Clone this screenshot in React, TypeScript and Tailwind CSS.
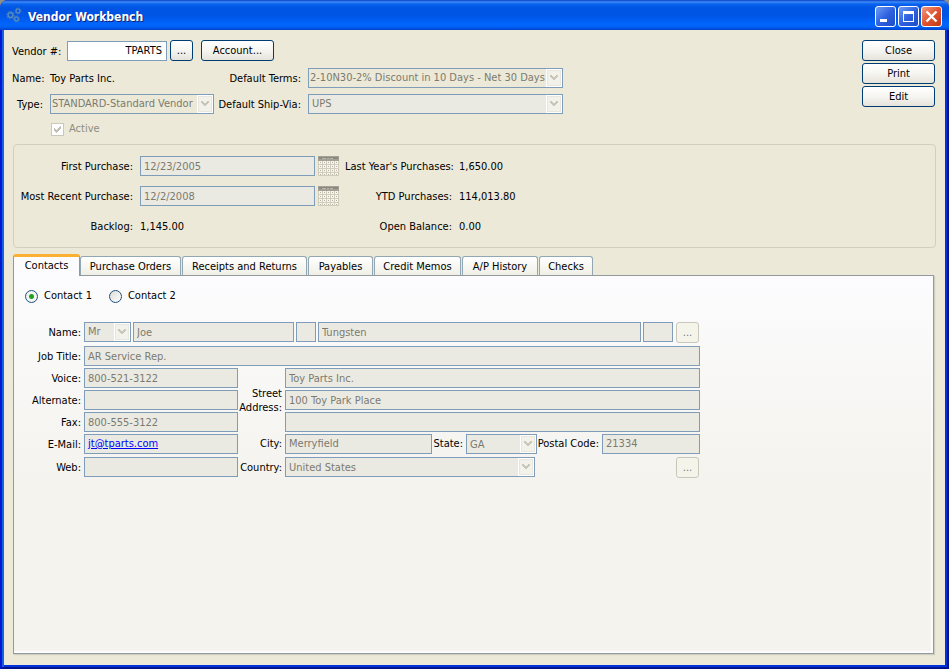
import { useState } from 'react';
import type { InputHTMLAttributes, ReactNode } from 'react';
import clsx from 'clsx';

const tabs = [
  { label: 'Contacts', width: 'w-[67px]' },
  { label: 'Purchase Orders', width: 'w-[101px]' },
  { label: 'Receipts and Returns', width: 'w-[125px]' },
  { label: 'Payables', width: 'w-[65px]' },
  { label: 'Credit Memos', width: 'w-[87px]' },
  { label: 'A/P History', width: 'w-[76px]' },
  { label: 'Checks', width: 'w-[54px]' },
];

const fieldClass = 'h-5 min-w-0 border border-[#7f9db9] bg-[#ebeae2] px-[3px] text-[#7b7a70]';

function Field({ className, ...props }: InputHTMLAttributes<HTMLInputElement>) {
  return <input type="text" disabled className={clsx(fieldClass, className)} {...props} />;
}

function Dropdown({
  id,
  value,
  className,
  bg = 'bg-[#ebeae2]',
  pad = 'pl-[3px]',
}: {
  id: string;
  value: string;
  className?: string;
  bg?: string;
  pad?: string;
}) {
  return (
    <div className={clsx('relative h-5', className)}>
      <select
        id={id}
        disabled
        defaultValue={value}
        className={clsx(
          'block h-5 w-full appearance-none border border-[#7f9db9] pr-4 text-[#7b7a70] opacity-100',
          bg,
          pad
        )}
      >
        <option>{value}</option>
      </select>
      <span className="pointer-events-none absolute top-px right-px h-[18px] w-4 bg-white p-px">
        <svg viewBox="0 0 14 16" className="h-4 w-[14px]" shapeRendering="crispEdges">
          <rect width="14" height="16" rx="1" fill="#e8e7df" />
          <rect x="1" y="1" width="12" height="14" fill="#f3f2ea" />
          <path d="M3 5h2v1h1v1h2v-1h1v-1h2v2h-1v1h-1v1h-1v1h-2v-1h-1v-1h-1v-1h-1z" fill="#c9c7ba" />
        </svg>
      </span>
    </div>
  );
}

function Button({
  children,
  className,
  disabled,
  label,
}: {
  children: ReactNode;
  className?: string;
  disabled?: boolean;
  label?: string;
}) {
  return (
    <button
      disabled={disabled}
      aria-label={label}
      className={clsx(
        'flex h-[21px] shrink-0 items-center justify-center rounded-[3px] border pt-px',
        disabled
          ? 'border-[#c9c7ba] bg-[#f5f4ea] text-[#7b7a70]'
          : 'border-[#003c74] bg-linear-to-b from-white via-[#f6f5f1] to-[#e6e3da] text-black',
        className
      )}
    >
      {children}
    </button>
  );
}

function CalendarIcon() {
  return (
    <svg viewBox="0 0 21 20" className="h-5 w-[21px] shrink-0" shapeRendering="crispEdges">
      <rect width="21" height="20" fill="#cfccbc" />
      <rect width="21" height="5" fill="#a3a195" />
      <rect x="1" y="1" width="19" height="2" fill="#8b897e" />
      <path d="M4 2.5h4M9 2.5h2M12 2.5h3" stroke="#b9b7aa" />
      {[5, 9, 13, 17].map((y) =>
        [1, 5, 9, 13, 17].map((x) => (
          <g key={`${x}-${y}`}>
            <rect x={x} y={y} width="3" height={y === 17 ? 2 : 3} fill="#f8f6ec" />
            <rect x={x + 1} y={y + 1} width="1" height="1" fill="#b5b2a3" />
          </g>
        ))
      )}
    </svg>
  );
}

function GearsIcon() {
  return (
    <svg viewBox="0 0 16 16" className="h-4 w-4" fill="none" stroke="#4f86bd">
      <circle cx="4.5" cy="8" r="2.4" strokeWidth="1.8" />
      <circle cx="4.5" cy="8" r="3.8" strokeDasharray="1.3 1.6" />
      <circle cx="12" cy="4" r="1.9" strokeWidth="1.5" />
      <circle cx="12" cy="4" r="3" strokeDasharray="1.1 1.2" />
      <circle cx="10.5" cy="12" r="1.9" strokeWidth="1.5" />
      <circle cx="10.5" cy="12" r="3" strokeDasharray="1.1 1.2" />
    </svg>
  );
}

function TitleBar() {
  const control = 'flex h-[21px] w-[21px] items-center justify-center rounded-[3px] border border-white';
  return (
    <header className="flex h-[30px] shrink-0 items-center rounded-t-lg bg-[linear-gradient(180deg,#0a3fc4_0,#3c8cf8_2px,#0a62ee_4px,#0054e3_8px,#0055e6_16px,#0066fd_24px,#0062f6_27px,#0040c8_30px)] pr-[7px] pl-[6px]">
      <GearsIcon />
      <h1 className="mt-[3px] ml-[6px] flex-1 text-[12px] font-bold text-white [text-shadow:1px_1px_#0a1f7c]">
        Vendor Workbench
      </h1>
      <div className="mt-[3px] flex gap-[2px]">
        <button aria-label="Minimize" className={clsx(control, 'bg-linear-to-br from-[#6f9bf5] via-[#2f62e0] to-[#1c4bc8]')}>
          <svg viewBox="0 0 19 19" className="h-[19px] w-[19px]">
            <path d="M4 12h7v3H4z" fill="#fff" />
          </svg>
        </button>
        <button aria-label="Maximize" className={clsx(control, 'bg-linear-to-br from-[#6f9bf5] via-[#2f62e0] to-[#1c4bc8]')}>
          <svg viewBox="0 0 19 19" className="h-[19px] w-[19px]" shapeRendering="crispEdges">
            <path d="M4 4h11v11H4zM5 7v7h9V7z" fill="#fff" fillRule="evenodd" />
          </svg>
        </button>
        <button aria-label="Close window" className={clsx(control, 'bg-linear-to-br from-[#f09a80] via-[#e2522d] to-[#c03a16]')}>
          <svg viewBox="0 0 19 19" className="h-[19px] w-[19px]" stroke="#fff" strokeWidth="2.4">
            <path d="M4.5 4.5l10 10M14.5 4.5l-10 10" />
          </svg>
        </button>
      </div>
    </header>
  );
}

function VendorHeader() {
  return (
    <div className="flex items-start justify-between pl-2">
      <div>
        <div className="flex items-center">
          <label htmlFor="vendor" className="w-[55px] pt-[2px]">
            Vendor #:
          </label>
          <input
            id="vendor"
            type="text"
            defaultValue="TPARTS"
            className="h-5 w-[100px] border border-[#7f9db9] bg-white px-1 text-right"
          />
          <Button className="ml-[3px] w-[23px]" label="Find vendor">
            ...
          </Button>
          <Button className="ml-2 w-[73px]">Account...</Button>
        </div>
        <div className="mt-[7px] grid grid-cols-[31px_164px_80px_255px] items-center gap-x-[7px] gap-y-[6px] whitespace-nowrap">
          <span className="pt-[2px] text-right">Name:</span>
          <span className="pt-[2px]">Toy Parts Inc.</span>
          <label htmlFor="terms" className="flex justify-end pt-[2px]">
            Default Terms:
          </label>
          <Dropdown id="terms" value="2-10N30-2% Discount in 10 Days - Net 30 Days" bg="bg-[#ece9d8]" pad="pl-[1px]" />
          <label htmlFor="type" className="pt-[2px] text-right">
            Type:
          </label>
          <Dropdown id="type" value="STANDARD-Standard Vendor" bg="bg-[#ece9d8]" pad="pl-[1px]" />
          <label htmlFor="shipvia" className="flex justify-end pt-[2px]">
            Default Ship-Via:
          </label>
          <Dropdown id="shipvia" value="UPS" />
        </div>
        <label className="mt-2 ml-[39px] flex items-center gap-[5px] text-[#8f8d82]">
          <span className="relative flex">
            <input type="checkbox" defaultChecked disabled className="h-[13px] w-[13px] appearance-none border border-[#cac8bb] bg-white" />
            <svg viewBox="0 0 13 13" className="pointer-events-none absolute inset-0" shapeRendering="crispEdges">
              <path d="M3 5h1v1h1v1h1v-1h1v-1h1v-1h1v-1h1v3h-1v1h-1v1h-1v1h-1v1h-1v-1h-1v-1h-1z" fill="#c2c0b3" />
            </svg>
          </span>
          Active
        </label>
      </div>
      <div className="flex flex-col gap-[2px]">
        <Button className="w-[73px]">Close</Button>
        <Button className="w-[73px]">Print</Button>
        <Button className="w-[73px]">Edit</Button>
      </div>
    </div>
  );
}

function PurchaseSummary() {
  return (
    <section className="mt-2 mr-[-1px] ml-[9px] grid h-[104px] grid-cols-[119px_175px_21px_106px_1fr] content-start items-center gap-y-[10px] rounded-[4px] border border-[#d0d0bf] pt-[11px] whitespace-nowrap">
      <label htmlFor="first" className="pt-[2px] text-right">
        First Purchase:
      </label>
      <Field id="first" defaultValue="12/23/2005" className="ml-[7px] w-[175px]" />
      <span className="ml-[10px]">
        <CalendarIcon />
      </span>
      <span className="ml-4 pt-[2px]">Last Year&apos;s Purchases:</span>
      <span className="ml-6 pt-[2px]">1,650.00</span>

      <label htmlFor="recent" className="pt-[2px] text-right">
        Most Recent Purchase:
      </label>
      <Field id="recent" defaultValue="12/2/2008" className="ml-[7px] w-[175px]" />
      <span className="ml-[10px]">
        <CalendarIcon />
      </span>
      <span className="-mr-[17px] pt-[2px] text-right">YTD Purchases:</span>
      <span className="ml-6 pt-[2px]">114,013.80</span>

      <span className="pt-[2px] text-right">Backlog:</span>
      <span className="ml-[7px] h-5 pt-px leading-5">1,145.00</span>
      <span />
      <span className="-mr-[17px] pt-[2px] text-right">Open Balance:</span>
      <span className="ml-6 pt-[2px]">0.00</span>
    </section>
  );
}

function Row({ id, label, children }: { id: string; label: string; children: ReactNode }) {
  return (
    <div className="flex">
      <label htmlFor={id} className="w-[70px] shrink-0 pt-px pr-[3px] text-right leading-5">
        {label}
      </label>
      {children}
    </div>
  );
}

function ContactForm() {
  const [contact, setContact] = useState(1);
  return (
    <div className="pt-[13px]">
      <div className="flex gap-[17px] pl-[11px]">
        {[1, 2].map((n) => (
          <label key={n} className="flex items-center gap-[6px]">
            <input
              type="radio"
              name="contact"
              checked={contact === n}
              onChange={() => setContact(n)}
              className="h-[13px] w-[13px] appearance-none rounded-full border border-[#1d5281] bg-linear-to-br from-[#dcdcd7] to-white checked:bg-[radial-gradient(circle,#21a121_0,#21a121_2px,#f4f4f1_3px)]"
            />
            Contact {n}
          </label>
        ))}
      </div>

      <div className="mt-[19px] w-full max-w-[686px] whitespace-nowrap">
        <Row id="title" label="Name:">
          <div className="flex flex-1 gap-[2px]">
            <Dropdown id="title" value="Mr" className="w-[47px]" />
            <Field aria-label="First name" defaultValue="Joe" className="w-[161px]" />
            <Field aria-label="Middle initial" className="w-5" />
            <Field aria-label="Last name" defaultValue="Tungsten" className="flex-1" />
            <Field aria-label="Suffix" className="w-[30px]" />
            <Button disabled className="mr-px ml-px w-[23px]" label="Select contact">
              ...
            </Button>
          </div>
        </Row>
        <div className="mt-[3px]">
          <Row id="job" label="Job Title:">
            <Field id="job" defaultValue="AR Service Rep." className="flex-1" />
          </Row>
        </div>

        <div className="mt-px flex">
          <div className="flex w-[224px] shrink-0 flex-col">
            <div className="flex flex-col gap-[1px]">
              <Row id="voice" label="Voice:">
                <Field id="voice" defaultValue="800-521-3122" className="w-[154px]" />
              </Row>
              <Row id="alternate" label="Alternate:">
                <Field id="alternate" className="w-[154px]" />
              </Row>
              <Row id="fax" label="Fax:">
                <Field id="fax" defaultValue="800-555-3122" className="w-[154px]" />
              </Row>
              <Row id="email" label="E-Mail:">
                <div className={clsx(fieldClass, 'w-[154px] leading-[18px]')}>
                  <a id="email" href="mailto:jt@tparts.com" className="text-[#0000ff] underline">
                    jt@tparts.com
                  </a>
                </div>
              </Row>
            </div>
            <div className="mt-[2px]">
              <Row id="web" label="Web:">
                <Field id="web" className="w-[154px]" />
              </Row>
            </div>
          </div>

          <div className="min-w-0 flex-1">
            <div className="flex">
              <label htmlFor="street" className="flex w-[47px] shrink-0 flex-col items-end justify-center pt-[2px] pr-[3px] leading-[14px]">
                <span>Street</span>
                <span>Address:</span>
              </label>
              <div className="flex flex-1 flex-col gap-[2px]">
                <Field id="street" defaultValue="Toy Parts Inc." />
                <Field aria-label="Street address 2" defaultValue="100 Toy Park Place" />
                <Field aria-label="Street address 3" />
              </div>
            </div>
            <div className="mt-[2px] flex leading-5">
              <label htmlFor="city" className="w-[47px] shrink-0 pr-[3px] text-right">
                City:
              </label>
              <Field id="city" defaultValue="Merryfield" className="flex-1" />
              <label htmlFor="state" className="flex w-[34px] justify-end pr-[3px]">
                State:
              </label>
              <Dropdown id="state" value="GA" className="w-[71px]" />
              <label htmlFor="postal" className="flex w-[65px] justify-end pr-[3px]">
                Postal Code:
              </label>
              <Field id="postal" defaultValue="21334" className="w-[98px]" />
            </div>
            <div className="mt-[3px] flex leading-5">
              <label htmlFor="country" className="flex w-[47px] shrink-0 justify-end pt-px pr-[3px]">
                Country:
              </label>
              <Dropdown id="country" value="United States" className="w-[250px]" />
              <Button disabled className="mr-px ml-auto w-[23px]" label="Select address">
                ...
              </Button>
            </div>
          </div>
        </div>
      </div>
    </div>
  );
}

export default function App() {
  const [activeTab, setActiveTab] = useState('Contacts');
  return (
    <div className="min-h-screen bg-[#8f8f86] font-['DejaVu_Sans_Condensed','DejaVu_Sans',sans-serif] text-[11px] leading-[14px] text-black">
      <div className="flex min-h-screen flex-col rounded-t-lg bg-[#0831d9]">
        <TitleBar />
        <div className="flex flex-1 flex-col px-1 pb-1 shadow-[inset_2px_0_#0019cf,inset_-2px_-2px_#00138c,inset_4px_0_#1660e8,inset_-4px_-4px_#0033dd]">
          <main className="flex flex-1 flex-col bg-[#ece9d8] pt-[10px] pr-[10px] pb-[11px]">
            <VendorHeader />
            <PurchaseSummary />
            <div role="tablist" className="relative mt-[6px] ml-[9px] flex h-[22px] items-end whitespace-nowrap">
              {tabs.map((tab) => {
                const active = tab.label === activeTab;
                return (
                  <button
                    key={tab.label}
                    role="tab"
                    aria-selected={active}
                    onClick={() => setActiveTab(tab.label)}
                    className={clsx(
                      'flex justify-center border-x',
                      tab.width,
                      active
                        ? 'h-[22px] rounded-t-[3px] border-t-[3px] border-x-[#919b9c] border-t-[#fbb034] bg-[#fcfcfe] pt-[2px]'
                        : 'mr-px mb-px h-[19px] rounded-t-[3px] border-t border-[#91a7b4] bg-linear-to-b from-white to-[#f0efe6] pt-[3px]'
                    )}
                  >
                    {tab.label}
                  </button>
                );
              })}
            </div>
            <div
              role="tabpanel"
              className="-mt-px mr-px ml-[9px] flex-1 border border-[#919b9c] bg-[linear-gradient(180deg,#fcfcfe,#f4f3ee_55%)] shadow-[1px_1px_1px_#d0cebf,inset_-2px_-2px_#fcfcfe]"
            >
              {activeTab === 'Contacts' && <ContactForm />}
            </div>
          </main>
        </div>
      </div>
    </div>
  );
}
